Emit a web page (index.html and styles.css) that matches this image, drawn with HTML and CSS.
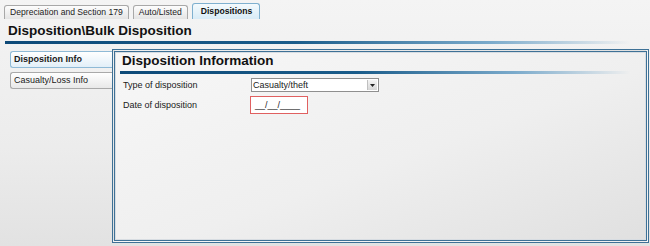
FILE: index.html
```html
<!DOCTYPE html>
<html>
<head>
<meta charset="utf-8">
<link rel="stylesheet" href="styles.css">
</head>
<body>
<div class="tabs">
  <div class="tab">Depreciation and Section 179</div>
  <div class="tab">Auto/Listed</div>
  <div class="tab active">Dispositions</div>
</div>
<div class="page-title">Disposition\Bulk Disposition</div>
<div class="rule"></div>
<div class="main">
  <div class="nav">
    <div class="nav-btn active">Disposition Info</div>
    <div class="nav-btn">Casualty/Loss Info</div>
  </div>
  <div class="panel">
    <div class="panel-title">Disposition Information</div>
    <div class="rule panel-rule"></div>
    <div class="form">
      <div class="row">
        <label class="lbl">Type of disposition</label>
        <div class="select"><span class="sel-text">Casualty/theft</span><span class="sel-btn"><svg width="5" height="3" viewBox="0 0 5 3"><path d="M0 0H5L2.5 3Z" fill="#222"/></svg></span></div>
      </div>
      <div class="row">
        <label class="lbl">Date of disposition</label>
        <div class="date">__/__/____</div>
      </div>
    </div>
  </div>
</div>
</body>
</html>
```
FILE: styles.css
```css
html, body { margin: 0; padding: 0; }
body {
  width: 650px; height: 246px; overflow: hidden;
  background: linear-gradient(180deg, #f4f4f4 0%, #ececec 60%, #e2e2e2 100%);
  font-family: "Liberation Sans", Arial, sans-serif;
  font-size: 9px; color: #1a1a1a;
}
.tabs { display: flex; align-items: flex-end; gap: 4px; padding: 3px 0 0 4px; height: 16px; font-size: 8.6px; }
.tab {
  height: 13px; line-height: 13px; padding: 0 5px;
  border: 1px solid #a8a8a8; border-bottom: none; border-radius: 3px 3px 0 0;
  background: linear-gradient(180deg, #fdfdfd, #e4e4e4);
  color: #222;
}
.tab.active {
  height: 15px; line-height: 15px; padding: 0 7px 0 8px;
  border-color: #7fb0cf; background: linear-gradient(180deg, #f4fafd, #d8ebf6);
  font-weight: bold; color: #111;
}
.page-title {
  font-weight: bold; font-size: 13.5px; padding: 3px 0 0 8px; height: 17px; line-height: 17px; color: #111;
}
.rule {
  height: 3px; margin: 2px 0 0 5px;
  background: linear-gradient(90deg, #0e4a78 0%, #1a5c8a 45%, #7aaacb 75%, rgba(240,240,240,0) 97%);
}
.main { display: flex; margin-top: 5px; }
.nav { width: 102px; padding: 2px 0 0 10px; display: flex; flex-direction: column; gap: 4px; }
.nav-btn {
  height: 15px; line-height: 15px; padding-left: 3px;
  border: 1px solid #a9a9a9; border-right: none; border-radius: 3px 0 0 3px;
  background: linear-gradient(180deg, #ffffff, #e8e8e8);
}
.nav-btn.active {
  font-weight: bold; border-color: #8fbad6;
  background: linear-gradient(180deg, #ffffff, #e2eff8);
}
.panel {
  width: 526px; height: 188px;
  border: 3px double #3e7196;
  box-shadow: inset 0 0 0 1px #d8dde2;
  background: linear-gradient(160deg, #f7f7f7 0%, #efefef 55%, #e0e0e0 100%);
  padding: 0 0 0 5px;
}
.panel-title { font-weight: bold; font-size: 13.5px; height: 17px; line-height: 17px; padding: 0 0 0 2px; color: #111; }
.panel-rule { margin: 2px 0 0 0; }
.form { padding: 4px 0 0 3px; display: flex; flex-direction: column; gap: 4px; }
.row { display: flex; align-items: center; }
.lbl { width: 128px; }
.select {
  width: 126px; height: 12px; border: 1px solid #8f8f8f; background: #fff;
  display: flex; align-items: center; justify-content: space-between;
}
.sel-text { padding-left: 1px; }
.sel-btn {
  width: 9px; height: 10px; margin-right: 1px; background: linear-gradient(180deg, #f4f4f4, #d6d6d6);
  border-left: 1px solid #c0c0c0; display: flex; align-items: center; justify-content: center;
}
.date {
  width: 52px; height: 16px; line-height: 16px; padding-left: 4px;
  border: 1px solid #e06060; background: #fff; margin-left: -1px;
}
```
